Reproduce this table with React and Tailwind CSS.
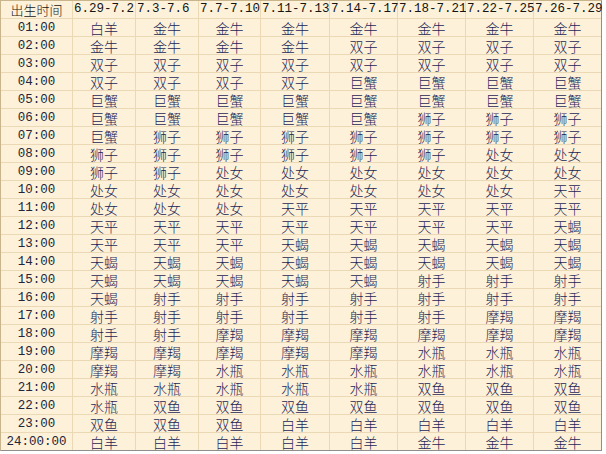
import React from 'react';

const dates = ['6.29-7.2', '7.3-7.6', '7.7-7.10', '7.11-7.13', '7.14-7.17', '7.18-7.21', '7.22-7.25', '7.26-7.29'];

const rows = [
  ['01:00', '白羊 金牛 金牛 金牛 金牛 金牛 金牛 金牛'],
  ['02:00', '金牛 金牛 金牛 金牛 双子 双子 双子 双子'],
  ['03:00', '双子 双子 双子 双子 双子 双子 双子 双子'],
  ['04:00', '双子 双子 双子 双子 巨蟹 巨蟹 巨蟹 巨蟹'],
  ['05:00', '巨蟹 巨蟹 巨蟹 巨蟹 巨蟹 巨蟹 巨蟹 巨蟹'],
  ['06:00', '巨蟹 巨蟹 巨蟹 巨蟹 巨蟹 狮子 狮子 狮子'],
  ['07:00', '巨蟹 狮子 狮子 狮子 狮子 狮子 狮子 狮子'],
  ['08:00', '狮子 狮子 狮子 狮子 狮子 狮子 处女 处女'],
  ['09:00', '狮子 狮子 处女 处女 处女 处女 处女 处女'],
  ['10:00', '处女 处女 处女 处女 处女 处女 处女 天平'],
  ['11:00', '处女 处女 处女 天平 天平 天平 天平 天平'],
  ['12:00', '天平 天平 天平 天平 天平 天平 天平 天蝎'],
  ['13:00', '天平 天平 天平 天蝎 天蝎 天蝎 天蝎 天蝎'],
  ['14:00', '天蝎 天蝎 天蝎 天蝎 天蝎 天蝎 天蝎 天蝎'],
  ['15:00', '天蝎 天蝎 天蝎 天蝎 天蝎 射手 射手 射手'],
  ['16:00', '天蝎 射手 射手 射手 射手 射手 射手 射手'],
  ['17:00', '射手 射手 射手 射手 射手 射手 摩羯 摩羯'],
  ['18:00', '射手 射手 摩羯 摩羯 摩羯 摩羯 摩羯 摩羯'],
  ['19:00', '摩羯 摩羯 摩羯 摩羯 摩羯 水瓶 水瓶 水瓶'],
  ['20:00', '摩羯 摩羯 水瓶 水瓶 水瓶 水瓶 水瓶 水瓶'],
  ['21:00', '水瓶 水瓶 水瓶 水瓶 水瓶 双鱼 双鱼 双鱼'],
  ['22:00', '水瓶 双鱼 双鱼 双鱼 双鱼 双鱼 双鱼 双鱼'],
  ['23:00', '双鱼 双鱼 双鱼 白羊 白羊 白羊 白羊 白羊'],
  ['24:00:00', '白羊 白羊 白羊 白羊 白羊 金牛 金牛 金牛'],
];

const mono = "font-['Liberation_Mono',monospace] text-[12.5px]";
const cjk = "font-['SimSun','Noto_Sans_CJK_SC',sans-serif] font-light";
const cell = 'bg-[#fdf2d9] flex items-center leading-none';

export default function App() {
  return (
    <div className="w-[606px] h-[454px] bg-white">
      <div className="w-[602px] grid grid-cols-[71px_62px_62px_61px_68px_67px_67px_67px_67px] auto-rows-[17px] gap-px bg-[#ead9b4] border-t border-l border-[#c9b58c] border-b border-r border-b-[#8e8e8e] border-r-[#8e8e8e]">
        <div className={`${cell} justify-center text-[13px] text-[#151515] ${cjk}`}>出生时间</div>
        {dates.map((d) => (
          <div key={d} className={`${cell} pl-[1px] whitespace-nowrap overflow-visible text-[#151515] ${mono}`}>{d}</div>
        ))}
        {rows.map(([time, signs]) => (
          <React.Fragment key={time}>
            <div className={`${cell} justify-center pt-px text-[#23253c] ${mono}`}>{time}</div>
            {signs.split(' ').map((s, i) => (
              <div key={i} className={`${cell} justify-center text-[14px] text-[#1c2556] ${cjk}`}>{s}</div>
            ))}
          </React.Fragment>
        ))}
      </div>
    </div>
  );
}
